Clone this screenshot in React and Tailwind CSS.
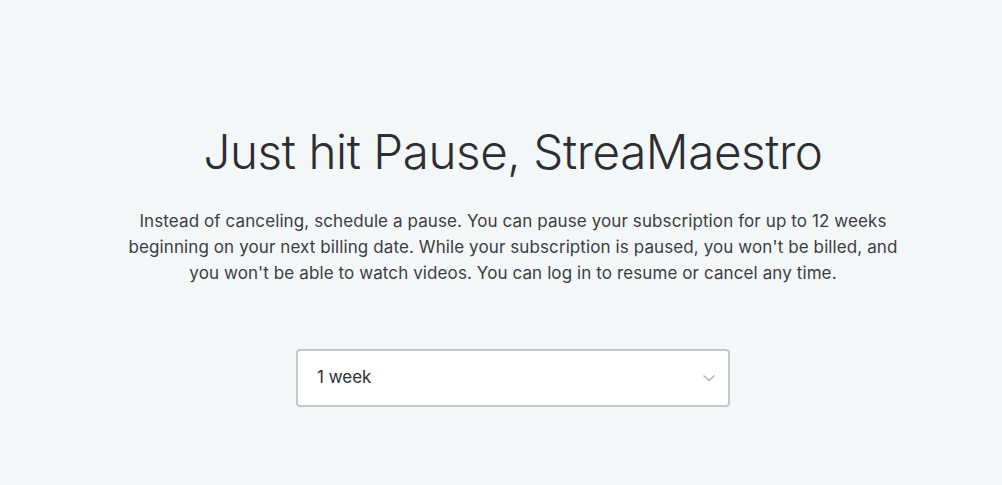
import { useState } from 'react';

const ChevronDown = () => (
  <svg width="14" height="14" viewBox="0 0 14 14" fill="none" className="text-[#a8adb5]">
    <path d="M1.5 4.5 L7 9.5 L12.5 4.5" stroke="currentColor" strokeWidth="1.3" />
  </svg>
);

const App = () => {
  const [weeks] = useState('1 week');

  return (
    <div className="min-h-[485px] w-full bg-[#f4f7f8] font-['Inter',sans-serif] text-[#2b2e33]">
      {/* contenu un peu décalé à droite comme sur la capture */}
      <div className="flex flex-col items-center pl-[24px] pt-[124px]">
        <h1 className="text-[47.5px] leading-[56px] font-light tracking-[-0.4px] text-[#2b2e33]">
          Just hit Pause, StreaMaestro
        </h1>
        <p className="mt-[28px] text-center text-[17px] leading-[26px] tracking-[0.1px] text-[#3a3d42]">
          Instead of canceling, schedule a pause. You can pause your subscription for up to 12 weeks
          <br />
          beginning on your next billing date. While your subscription is paused, you won't be billed, and
          <br />
          you won't be able to watch videos. You can log in to resume or cancel any time.
        </p>
        <div className="mt-[63px] flex h-[58px] w-[434px] items-center justify-between rounded-[4px] border-2 border-[#c3c8cf] bg-white pl-[19px] pr-[12px]">
          <span className="text-[17px] text-[#2b2e33]">{weeks}</span>
          <ChevronDown />
        </div>
      </div>
    </div>
  );
};

export default App;
